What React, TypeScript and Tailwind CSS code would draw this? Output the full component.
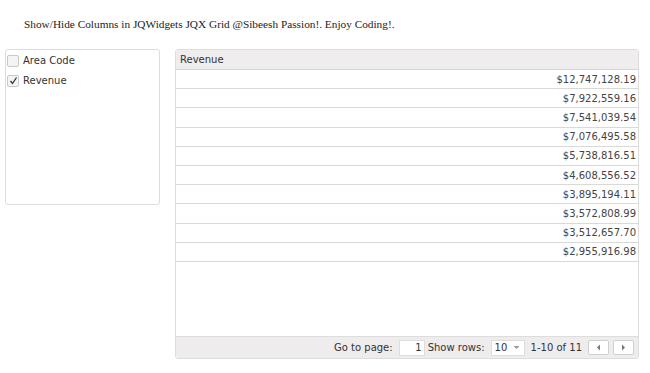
import React from "react";

const values = [
  "$12,747,128.19",
  "$7,922,559.16",
  "$7,541,039.54",
  "$7,076,495.58",
  "$5,738,816.51",
  "$4,608,556.52",
  "$3,895,194.11",
  "$3,572,808.99",
  "$3,512,657.70",
  "$2,955,916.98",
];

function Check({ checked }: { checked: boolean }) {
  return (
    <span className="w-[12px] h-[12px] border border-[#c9c9c9] rounded-[2px] bg-[#f4f4f4] flex items-center justify-center">
      {checked && (
        <svg width="9" height="9" viewBox="0 0 9 9">
          <path d="M1.5 5 L3.5 7.5 L7.5 1.5" fill="none" stroke="#333" strokeWidth="1.3" />
        </svg>
      )}
    </span>
  );
}

export default function App() {
  const font = { fontFamily: '"DejaVu Sans", Verdana, sans-serif' };
  return (
    <div className="w-[650px] h-[373px] bg-white relative">
      <div
        className="pl-[24px] pt-[16px] h-[49px] text-[11.3px] text-[#222]"
        style={{ fontFamily: '"Liberation Serif", "Times New Roman", serif' }}
      >
        Show/Hide Columns in JQWidgets JQX Grid @Sibeesh Passion!. Enjoy Coding!.
      </div>
      <div className="flex pl-[5px]" style={font}>
        <div className="w-[155px] h-[156px] border border-[#dddddd] rounded-[3px] pt-[1px] pl-[1px] text-[10px] text-[#333]">
          <div className="flex items-center gap-[4px] h-[19px]">
            <Check checked={false} />
            <span>Area Code</span>
          </div>
          <div className="flex items-center gap-[4px] h-[19px] mt-[1px]">
            <Check checked={true} />
            <span>Revenue</span>
          </div>
        </div>
        <div className="ml-[15px] w-[464px] h-[310px] border border-[#dddddd] rounded-[3px] flex flex-col text-[10px] text-[#444] overflow-hidden">
          <div className="h-[20px] bg-[#efedee] border-b border-[#d4d4d4] flex items-center pl-[4px] text-[#333]">
            Revenue
          </div>
          {values.map((v) => (
            <div
              key={v}
              className="h-[19.2px] border-b border-[#d9d9d9] flex items-center justify-end pr-[2px]"
            >
              {v}
            </div>
          ))}
          <div className="flex-1" />
          <div className="h-[22px] bg-[#eeeced] border-t border-[#dddddd] flex items-center justify-end pr-[4px] text-[#333]">
            <span>Go to page:</span>
            <span className="ml-[6px] w-[26px] h-[16px] bg-white border border-[#dddddd] flex items-center justify-end pr-[2px]">
              1
            </span>
            <span className="ml-[3px]">Show rows:</span>
            <span className="ml-[6px] w-[34px] h-[16px] bg-white border border-[#dddddd] flex items-center pl-[3px] gap-[6px]">
              10
              <svg width="7" height="5" viewBox="0 0 7 5">
                <path d="M0.5 1 L6.5 1 L3.5 4 Z" fill="#999" />
              </svg>
            </span>
            <span className="ml-[6px]">1-10 of 11</span>
            <span className="ml-[6px] w-[21px] h-[15px] bg-white border border-[#d0d0d0] rounded-[2px] flex items-center justify-center">
              <svg width="5" height="7" viewBox="0 0 5 7">
                <path d="M4 0.5 L4 6.5 L1 3.5 Z" fill="#777" />
              </svg>
            </span>
            <span className="ml-[4px] w-[21px] h-[15px] bg-white border border-[#d0d0d0] rounded-[2px] flex items-center justify-center">
              <svg width="5" height="7" viewBox="0 0 5 7">
                <path d="M1 0.5 L1 6.5 L4 3.5 Z" fill="#777" />
              </svg>
            </span>
          </div>
        </div>
      </div>
    </div>
  );
}
